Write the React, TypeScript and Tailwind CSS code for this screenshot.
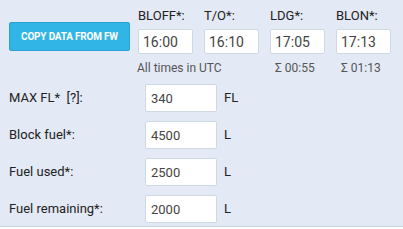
import React from 'react';

const font = { fontFamily: 'Roboto, "Liberation Sans", Arial, sans-serif' };

const TimeField = ({ label, value }: { label: string; value: string }) => (
  <div className="flex flex-col w-[55px]">
    <label className="text-[13px] leading-[15px] text-[#222] mb-[6px]">{label}</label>
    <input
      readOnly
      value={value}
      className="w-[55px] h-[25px] bg-white border border-[#cfd9e6] rounded-[2px] px-[4px] text-[14px] text-[#444] outline-none"
    />
  </div>
);

const FuelRow = ({ label, value, unit }: { label: string; value: string; unit: string }) => (
  <div className="flex items-center h-[28px]">
    <label className="w-[136px] text-[13px] text-[#222] whitespace-pre">{label}</label>
    <input
      readOnly
      value={value}
      className="w-[72px] h-[28px] bg-white border border-[#cfd9e6] rounded-[2px] px-[5px] text-[13px] text-[#444] outline-none"
    />
    <span className="ml-[7px] text-[13px] text-[#222]">{unit}</span>
  </div>
);

export default function App() {
  return (
    <div style={font} className="w-[403px] h-[229px] bg-white">
      <div className="h-[227px] bg-[#e3eaf5] border-b border-[#c5d3e6] pl-[9px] pt-[8px]">
        <div className="flex">
          <button className="mt-[14px] w-[121px] h-[29px] bg-[#31b5e6] border border-[#2aa3d3] rounded-[2px] text-white text-[10px] font-bold tracking-[-0.2px]">
            COPY DATA FROM FW
          </button>
          <div className="ml-[8px] flex gap-[11px]">
            <TimeField label="BLOFF*:" value="16:00" />
            <TimeField label="T/O*:" value="16:10" />
            <TimeField label="LDG*:" value="17:05" />
            <TimeField label="BLON*:" value="17:13" />
          </div>
        </div>
        <div className="flex text-[12px] text-[#555] mt-[7px] h-[14px] leading-[14px]">
          <span className="ml-[128px] w-[138px]">All times in UTC</span>
          <span className="w-[66px]">Σ 00:55</span>
          <span>Σ 01:13</span>
        </div>
        <div className="mt-[9px] flex flex-col gap-[9px]">
          <FuelRow label="MAX FL*  [?]:" value="340" unit="FL" />
          <FuelRow label="Block fuel*:" value="4500" unit="L" />
          <FuelRow label="Fuel used*:" value="2500" unit="L" />
          <FuelRow label="Fuel remaining*:" value="2000" unit="L" />
        </div>
      </div>
    </div>
  );
}
